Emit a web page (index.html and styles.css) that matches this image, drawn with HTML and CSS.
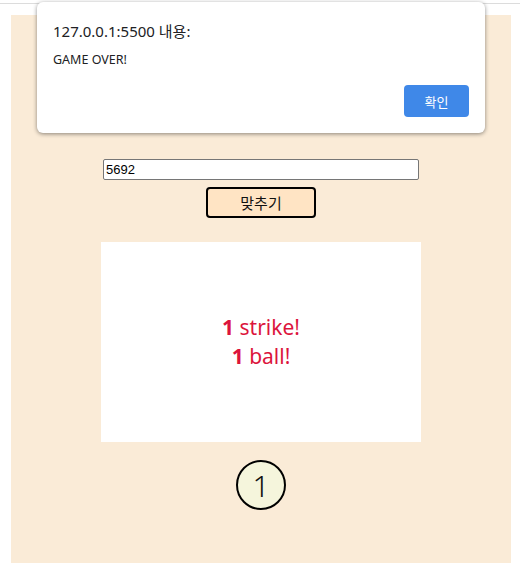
FILE: index.html
```html
<!DOCTYPE html>
<html lang="ko">
<head>
<meta charset="utf-8">
<link rel="stylesheet" href="styles.css">
</head>
<body>
<div class="topline"></div>
<main class="game">
  <input class="guess" type="text" value="5692">
  <button class="submit" type="button">맞추기</button>
  <div class="result">
    <p><b>1</b> strike!</p>
    <p><b>1</b> ball!</p>
  </div>
  <div class="count">1</div>
</main>
<div class="dialog">
  <div class="dialog-title">127.0.0.1:5500 내용:</div>
  <div class="dialog-msg">GAME OVER!</div>
  <div class="dialog-actions"><button class="ok" type="button">확인</button></div>
</div>
</body>
</html>
```
FILE: styles.css
```css
html, body {
  margin: 0;
  padding: 0;
  background: #ffffff;
  font-family: "Noto Sans", "Noto Sans CJK KR", sans-serif;
}
body {
  position: relative;
  width: 520px;
  height: 571px;
  overflow: hidden;
}
.topline {
  height: 3px;
  border-bottom: 1px solid #dcdcdc;
}
.game {
  box-sizing: border-box;
  margin: 11px 0 0 11px;
  width: 500px;
  height: 548px;
  background: #faebd7;
  display: flex;
  flex-direction: column;
  align-items: center;
  padding-top: 144px;
}
.guess {
  box-sizing: border-box;
  width: 316px;
  height: 21px;
  margin: 0;
  padding: 1px 2px;
  border: 1px solid #767676;
  border-radius: 2px;
  font-family: "Liberation Sans", "Noto Sans CJK KR", sans-serif;
  font-size: 13px;
  color: #000;
  background: #fff;
}
.submit {
  box-sizing: border-box;
  margin-top: 7px;
  width: 110px;
  height: 31px;
  background: #ffe4c4;
  border: 2px solid #000;
  border-radius: 4px;
  font-family: "Noto Sans CJK KR", sans-serif;
  font-size: 15px;
  font-weight: 400;
  color: #111;
  padding: 0;
}
.result {
  margin-top: 24px;
  width: 320px;
  height: 200px;
  background: #fff;
  display: flex;
  flex-direction: column;
  align-items: center;
  justify-content: center;
  color: #dc143c;
  font-size: 21px;
  line-height: 29px;
}
.result p {
  margin: 0;
}
.count {
  box-sizing: border-box;
  margin-top: 18px;
  width: 50px;
  height: 50px;
  border: 2px solid #000;
  border-radius: 50%;
  background: #f5f5dc;
  display: flex;
  align-items: center;
  justify-content: center;
  font-size: 30px;
  font-weight: 300;
  color: #111;
}
.dialog {
  position: absolute;
  left: 37px;
  top: 2px;
  box-sizing: border-box;
  width: 448px;
  height: 131px;
  background: #fff;
  border-radius: 6px;
  box-shadow: 0 1px 4px rgba(0,0,0,0.45);
  padding: 18px 16px 0 16px;
}
.dialog-title {
  font-size: 15px;
  color: #202124;
  line-height: 22px;
}
.dialog-msg {
  margin-top: 10px;
  font-size: 12.5px;
  color: #202124;
  line-height: 16px;
}
.dialog-actions {
  display: flex;
  justify-content: flex-end;
  margin-top: 17px;
}
.ok {
  width: 65px;
  height: 32px;
  border: none;
  border-radius: 4px;
  background: #3f88e8;
  color: #fff;
  font-family: "Noto Sans CJK KR", sans-serif;
  font-size: 13px;
  padding: 0;
}
```
